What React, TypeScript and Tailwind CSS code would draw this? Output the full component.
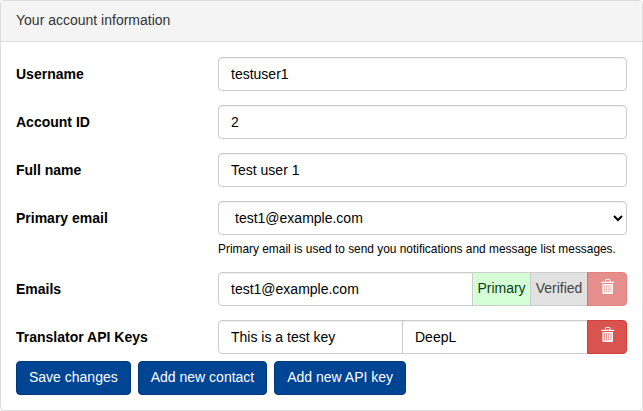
import type { ReactNode } from "react";

const inputBase =
  "h-[34px] min-w-0 border border-[#ccc] bg-white px-3 py-1.5 text-sm leading-5 text-black shadow-[inset_0_1px_1px_rgba(0,0,0,0.075)] outline-none";

function Row({ label, children }: { label: string; children: ReactNode }) {
  return (
    <div className="mb-3.5 flex">
      <label className="w-[202px] shrink-0 pt-[7px] font-bold leading-5">{label}</label>
      <div className="min-w-0 flex-1">{children}</div>
    </div>
  );
}

function TrashIcon() {
  return (
    <svg width="14" height="16" viewBox="0 0 14 16" fill="none" stroke="currentColor">
      <path d="M4.5 3V1.2Q4.5.5 5.2.5H8.3Q9 .5 9 1.2V3" />
      <path d="M0 4.1V3.5Q0 2.7 1 2.7H12.3Q13.3 2.7 13.3 3.5V4.1Z" fill="currentColor" stroke="none" />
      <path d="M1.4 5H12V14Q12 15 11 15H2.4Q1.4 15 1.4 14Z" fill="currentColor" stroke="none" />
      <path d="M3.4 6V13.6M5.6 6V13.6M7.8 6V13.6M10 6V13.6" className="stroke-[#d9534f]" strokeWidth="0.7" />
    </svg>
  );
}

function DeleteButton({ disabled = false }: { disabled?: boolean }) {
  return (
    <button
      disabled={disabled}
      aria-label="Delete"
      className="-ml-px flex h-[34px] w-10 shrink-0 items-start justify-center rounded-r border border-[#d43f3a] bg-[#d9534f] pl-px pt-[6px] text-white disabled:opacity-65"
    >
      <TrashIcon />
    </button>
  );
}

function ActionButton({ children }: { children: ReactNode }) {
  return (
    <button className="h-[34px] rounded border border-[#003a7c] bg-[#004494] px-3 pb-[7px] pt-[5px] text-sm leading-5 text-white">
      {children}
    </button>
  );
}

export default function App() {
  return (
    <div className="h-[411px] w-[643px] rounded border border-[#ddd] bg-white font-['Liberation_Sans',Arial,sans-serif] text-sm leading-5 text-black shadow-[0_1px_1px_rgba(0,0,0,0.05)]">
      <div className="h-[41px] rounded-t-[3px] border-b border-[#ddd] bg-[#f4f4f4] px-[15px] py-[9px] text-[#333]">
        Your account information
      </div>
      <div className="p-[15px]">
        <Row label="Username">
          <input className={`${inputBase} w-full rounded`} defaultValue="testuser1" />
        </Row>
        <Row label="Account ID">
          <input className={`${inputBase} w-full rounded`} defaultValue="2" />
        </Row>
        <Row label="Full name">
          <input className={`${inputBase} w-full rounded`} defaultValue="Test user 1" />
        </Row>
        <Row label="Primary email">
          <select className={`${inputBase} w-full rounded`}>
            <option>test1@example.com</option>
          </select>
          <p className="h-[23px] pt-[5px] text-[11.9px] leading-[18px]">
            Primary email is used to send you notifications and message list messages.
          </p>
        </Row>
        <Row label="Emails">
          <div className="flex">
            <input className={`${inputBase} flex-1 rounded-l`} defaultValue="test1@example.com" />
            <span className="-ml-px flex h-[34px] w-[59px] items-center justify-center border border-[#ccc] bg-[#d4ffd6] pb-[2px] text-[#0c3b12]">
              Primary
            </span>
            <span className="-ml-px flex h-[34px] w-[58px] items-center justify-center border border-[#ccc] bg-[#e1e1e1] pb-[2px] text-[#444]">
              Verified
            </span>
            <DeleteButton disabled />
          </div>
        </Row>
        <Row label="Translator API Keys">
          <div className="-mb-[7px] flex">
            <input className={`${inputBase} w-[185px] rounded-l`} defaultValue="This is a test key" />
            <input className={`${inputBase} -ml-px flex-1`} defaultValue="DeepL" />
            <DeleteButton />
          </div>
        </Row>
        <div className="flex gap-[7px]">
          <ActionButton>Save changes</ActionButton>
          <ActionButton>Add new contact</ActionButton>
          <ActionButton>Add new API key</ActionButton>
        </div>
      </div>
    </div>
  );
}
